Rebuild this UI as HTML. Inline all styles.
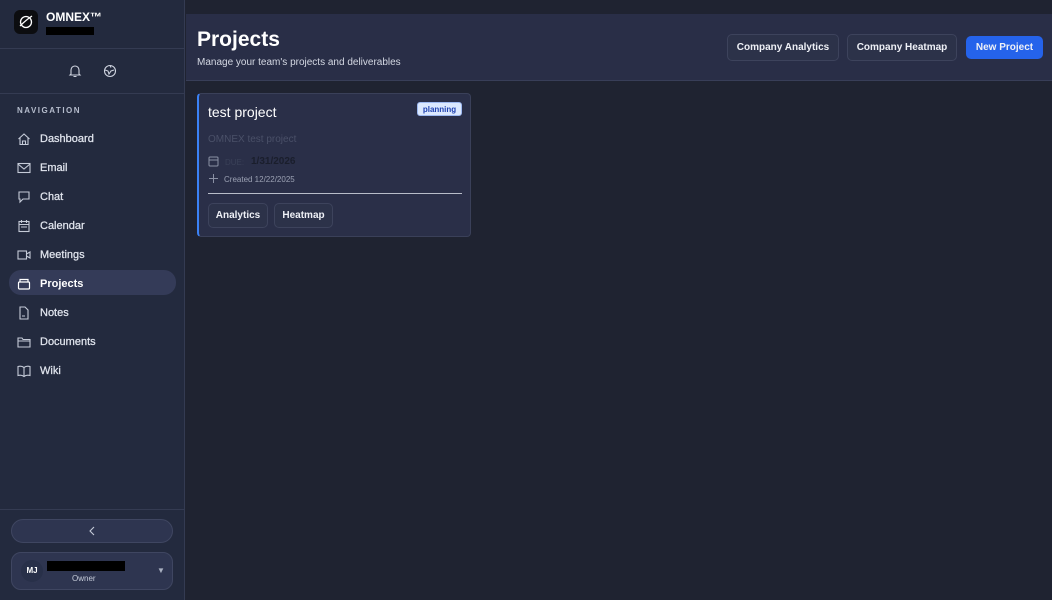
<!DOCTYPE html>
<html><head><meta charset="utf-8"><style>
*{box-sizing:border-box;margin:0;padding:0}
body{width:1052px;height:600px;overflow:hidden;background:#1f2331;font-family:"Liberation Sans",sans-serif;position:relative;color:#e6e9f2}
.sb{position:absolute;left:0;top:0;width:185px;height:600px;background:#232a3e;border-right:1px solid #343b52}
.logo{position:absolute;left:14px;top:10px;width:24px;height:24px;background:#0c0d10;border-radius:6px}
.hr{position:absolute;left:0;width:184px;height:1px;background:#343b52}
.nav{position:absolute;left:17px;font-size:11px;color:#e1e5ee;-webkit-text-stroke:0.25px #e1e5ee}
.nav svg{position:absolute;left:0;top:0}
.nav span{position:absolute;left:23px;top:1px;white-space:nowrap}
.btn{position:absolute;border:1px solid #3d435c;border-radius:5px;background:#2c3249;font-size:10px;font-weight:bold;color:#eef0f6;text-align:center}
</style></head><body>
<div class="sb">
<div class="logo"><svg width="24" height="24" viewBox="0 0 24 24"><circle cx="12" cy="12" r="5.5" fill="none" stroke="#fff" stroke-width="1.3"/><path d="M6 16 Q12 10 18 6" stroke="#fff" stroke-width="1.3" fill="none"/></svg></div>
<div style="position:absolute;left:46px;top:10px;font-size:12px;font-weight:bold;color:#fff">OMNEX™</div>
<div style="position:absolute;left:46px;top:27px;width:48px;height:8px;background:#000"></div>
<div class="hr" style="top:48px"></div>
<svg style="position:absolute;left:68px;top:64px" width="14" height="14" viewBox="0 0 14 14" fill="none" stroke="#cfd4e0" stroke-width="1.1"><path d="M3 10V6a4 4 0 018 0v4l1 1H2zM5.5 12.5h3"/></svg>
<svg style="position:absolute;left:103px;top:64px" width="14" height="14" viewBox="0 0 14 14" fill="none" stroke="#cfd4e0" stroke-width="1.1"><circle cx="7" cy="7" r="5.5"/><path d="M2 6l3 1 1 3 2-3 3-1M7 1.5l1 2"/></svg>
<div class="hr" style="top:93px"></div>
<div style="position:absolute;left:17px;top:106px;font-size:8px;font-weight:bold;letter-spacing:1.5px;color:#b5bccc">NAVIGATION</div>
<div style="position:absolute;left:9px;top:270px;width:167px;height:25px;border-radius:12px;background:#343b58"></div>
<div class="nav" style="top:132px"><svg width="14" height="14" viewBox="0 0 14 14" fill="none" stroke="#c5cbd8" stroke-width="1.1"><path d="M1.5 7L7 2l5.5 5M3 6v6.5h8V6M5.5 12.5V9h3v3.5"/></svg><span>Dashboard</span></div>
<div class="nav" style="top:161px"><svg width="14" height="14" viewBox="0 0 14 14" fill="none" stroke="#c5cbd8" stroke-width="1.1"><rect x="1" y="2.5" width="12" height="9"/><path d="M1 3l6 5 6-5"/></svg><span>Email</span></div>
<div class="nav" style="top:190px"><svg width="14" height="14" viewBox="0 0 14 14" fill="none" stroke="#c5cbd8" stroke-width="1.1"><path d="M2 2h10v7H6l-3 3V9H2z"/></svg><span>Chat</span></div>
<div class="nav" style="top:219px"><svg width="14" height="14" viewBox="0 0 14 14" fill="none" stroke="#c5cbd8" stroke-width="1.1"><rect x="2" y="2.5" width="10" height="10"/><path d="M2 5.5h10M4.5 1v3M9.5 1v3M4 8h6"/></svg><span>Calendar</span></div>
<div class="nav" style="top:248px"><svg width="14" height="14" viewBox="0 0 14 14" fill="none" stroke="#c5cbd8" stroke-width="1.1"><rect x="1" y="3" width="8.5" height="8"/><path d="M9.5 6l3.5-2v6l-3.5-2"/></svg><span>Meetings</span></div>
<div class="nav" style="top:277px;color:#fff;font-weight:bold;-webkit-text-stroke:0"><svg width="14" height="14" viewBox="0 0 14 14" fill="none" stroke="#fff" stroke-width="1.2"><rect x="1.5" y="5" width="11" height="7" rx="1"/><path d="M3 5V2.5h8V5"/></svg><span>Projects</span></div>
<div class="nav" style="top:306px"><svg width="14" height="14" viewBox="0 0 14 14" fill="none" stroke="#c5cbd8" stroke-width="1.1"><path d="M3 1h5l3 3v9H3zM5 10h3"/></svg><span>Notes</span></div>
<div class="nav" style="top:335px"><svg width="14" height="14" viewBox="0 0 14 14" fill="none" stroke="#c5cbd8" stroke-width="1.1"><path d="M1 3h4l1 1.5h7V12H1zM1 6h12"/></svg><span>Documents</span></div>
<div class="nav" style="top:364px"><svg width="14" height="14" viewBox="0 0 14 14" fill="none" stroke="#c5cbd8" stroke-width="1.1"><path d="M7 3.5C5 2 3 2 1 2.5v9C3 11 5 11 7 12.5 9 11 11 11 13 11.5v-9C11 2 9 2 7 3.5zM7 3.5v9"/></svg><span>Wiki</span></div>
<div class="hr" style="top:509px"></div>
<div style="position:absolute;left:11px;top:519px;width:162px;height:24px;border-radius:12px;background:#2e3550;border:1px solid #3f4661"></div>
<svg style="position:absolute;left:88px;top:526px" width="8" height="10" viewBox="0 0 8 10" fill="none" stroke="#c5cbd8" stroke-width="1.1"><path d="M6 1L2 5l4 4"/></svg>
<div style="position:absolute;left:11px;top:552px;width:162px;height:38px;border-radius:10px;background:#2e3550;border:1px solid #3f4661"></div>
<div style="position:absolute;left:21px;top:560px;width:22px;height:22px;border-radius:50%;background:#283049;font-size:8px;font-weight:bold;text-align:center;line-height:22px;color:#fff">MJ</div>
<div style="position:absolute;left:47px;top:561px;width:78px;height:10px;background:#000"></div>
<div style="position:absolute;left:72px;top:574px;font-size:8px;color:#c5cbd8">Owner</div>
<div style="position:absolute;left:157px;top:566px;font-size:8px;color:#aab1c2">▼</div>
</div>
<div style="position:absolute;left:186px;top:14px;width:866px;height:67px;background:#292e47;border-bottom:1px solid #383e58"></div>
<div style="position:absolute;left:197px;top:28px;font-size:21px;font-weight:bold;color:#fff">Projects</div>
<div style="position:absolute;left:197px;top:57px;font-size:10px;color:#d4d8e3">Manage your team's projects and deliverables</div>
<div class="btn" style="left:727px;top:34px;width:112px;height:27px;line-height:26px">Company Analytics</div>
<div class="btn" style="left:847px;top:34px;width:110px;height:27px;line-height:26px">Company Heatmap</div>
<div class="btn" style="left:966px;top:36px;width:77px;height:23px;line-height:24px;background:#2563eb;border:none">New Project</div>
<div style="position:absolute;left:197px;top:93px;width:274px;height:144px;background:#2a2f48;border:1px solid #3a4059;border-left:2px solid #3b82f6;border-radius:4px"></div>
<div style="position:absolute;left:208px;top:104px;font-size:14px;color:#fff">test project</div>
<div style="position:absolute;left:417px;top:102px;width:45px;height:14px;background:#dbe8fe;border:1px solid #9db8f0;border-radius:3px;font-size:8px;font-weight:bold;color:#1e40af;text-align:center;line-height:13px">planning</div>
<div style="position:absolute;left:208px;top:134px;font-size:10px;color:#4a5068">OMNEX test project</div>
<svg style="position:absolute;left:208px;top:156px" width="11" height="11" viewBox="0 0 11 11" fill="none" stroke="#8a90a4" stroke-width="1"><rect x="1" y="1" width="9" height="9" rx="1"/><path d="M1 4h9"/></svg>
<div style="position:absolute;left:225px;top:158px;font-size:8px;color:#3a4058">DUE:</div>
<div style="position:absolute;left:251px;top:156px;font-size:10px;font-weight:bold;color:#1a1e2c">1/31/2026</div>
<svg style="position:absolute;left:208px;top:173px" width="11" height="11" viewBox="0 0 11 11" fill="none" stroke="#8a90a4" stroke-width="1"><path d="M5.5 1v9M1 5.5h9"/></svg>
<div style="position:absolute;left:224px;top:175px;font-size:8px;color:#9ba1b3">Created 12/22/2025</div>
<div style="position:absolute;left:208px;top:193px;width:254px;height:1px;background:#b8bdc9"></div>
<div class="btn" style="left:208px;top:203px;width:60px;height:25px;line-height:24px">Analytics</div>
<div class="btn" style="left:274px;top:203px;width:59px;height:25px;line-height:24px">Heatmap</div>
</body></html>
